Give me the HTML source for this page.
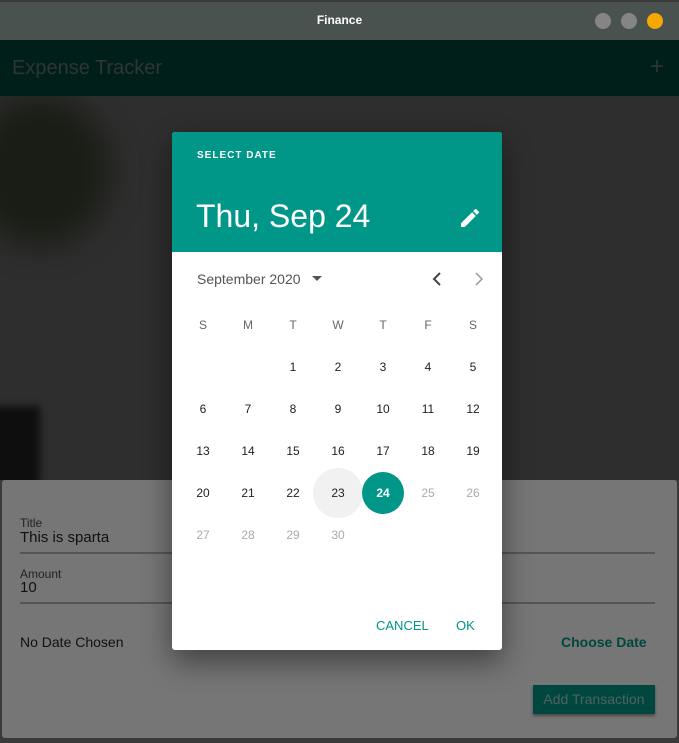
<!DOCTYPE html>
<html><head><style>
*{margin:0;padding:0;box-sizing:border-box}
body{width:679px;height:743px;background:#3a3a3a;font-family:"Liberation Sans",sans-serif;position:relative;overflow:hidden}
.a{position:absolute}
.c{position:absolute;width:40px;text-align:center;font-size:12px;color:#222;transform:translate(-20px,-7px)}
.g{color:#aaa}
.h{color:#666}
</style></head><body>
<div class="a" style="left:0;top:2px;width:679px;height:38px;background:#4a5250"></div>
<div class="a" style="left:0;top:13px;width:679px;text-align:center;color:#fff;font-size:12px;font-weight:bold">Finance</div>
<div class="a" style="left:595px;top:13px;width:16px;height:16px;border-radius:50%;background:#858585"></div>
<div class="a" style="left:621px;top:13px;width:16px;height:16px;border-radius:50%;background:#858585"></div>
<div class="a" style="left:647px;top:13px;width:16px;height:16px;border-radius:50%;background:#f5a800"></div>
<div class="a" style="left:0;top:40px;width:679px;height:56px;background:#001f1a"></div>
<div class="a" style="left:12px;top:57px;font-size:20px;color:#2f3533">Expense Tracker</div>
<div class="a" style="left:650px;top:53px;font-size:24px;color:#2f3533">+</div>
<div class="a" style="left:0;top:96px;width:679px;height:384px;background:#2e2e2e;overflow:hidden">
 <div class="a" style="left:-30px;top:0;width:140px;height:150px;border-radius:50%;background:#1a1d15;filter:blur(15px)"></div>
 <div class="a" style="left:-20px;top:310px;width:60px;height:80px;background:#0e0e0e;filter:blur(4px)"></div>
</div>
<div class="a" style="left:2px;top:480px;width:675px;height:258px;background:#767676;border-radius:3px"></div>
<div class="a" style="left:20px;top:516px;font-size:12px;color:#222">Title</div>
<div class="a" style="left:20px;top:529px;font-size:15px;color:#111">This is sparta</div>
<div class="a" style="left:20px;top:552px;width:635px;height:2px;background:#555"></div>
<div class="a" style="left:20px;top:567px;font-size:12px;color:#222">Amount</div>
<div class="a" style="left:20px;top:579px;font-size:15px;color:#111">10</div>
<div class="a" style="left:20px;top:602px;width:635px;height:2px;background:#555"></div>
<div class="a" style="left:20px;top:634px;font-size:14px;color:#111">No Date Chosen</div>
<div class="a" style="left:561px;top:634px;font-size:14px;font-weight:bold;color:#00473f">Choose Date</div>
<div class="a" style="left:533px;top:685px;width:122px;height:29px;background:#00473f;color:#4f625d;font-size:14px;text-align:center;line-height:29px;box-shadow:0 2px 3px rgba(0,0,0,.4)">Add Transaction</div>
<div class="a" style="left:172px;top:132px;width:330px;height:518px;background:#fff;border-radius:3px;box-shadow:0 12px 30px rgba(0,0,0,.45);overflow:hidden">
 <div class="a" style="left:0;top:0;width:330px;height:120px;background:#009688"></div>
 <div class="a" style="left:25px;top:18px;font-size:10px;letter-spacing:1px;color:#fff;font-weight:bold">SELECT DATE</div>
 <div class="a" style="left:24px;top:66px;font-size:32px;color:#fff">Thu, Sep 24</div>
 <svg class="a" style="left:286px;top:74px" width="24" height="24" viewBox="0 0 24 24"><path fill="#fff" d="M3 17.25V21h3.75L17.81 9.94l-3.75-3.75L3 17.25zM20.71 7.04a1 1 0 000-1.41l-2.34-2.34a1 1 0 00-1.41 0l-1.83 1.83 3.75 3.75 1.83-1.83z"/></svg>
 <div class="a" style="left:25px;top:139px;font-size:14px;color:#555">September 2020</div>
 <svg class="a" style="left:140px;top:144px" width="10" height="6"><path d="M0 0h10L5 5z" fill="#555"/></svg>
 <svg class="a" style="left:260px;top:140px" width="10" height="14"><path d="M8 1L2 7l6 6" stroke="#444" stroke-width="2" fill="none"/></svg>
 <svg class="a" style="left:302px;top:140px" width="10" height="14"><path d="M2 1l6 6-6 6" stroke="#999" stroke-width="1.5" fill="none"/></svg>
 <div class="a" style="left:141px;top:336px;width:50px;height:50px;border-radius:50%;background:#f1f1f1"></div>
 <div class="a" style="left:190px;top:340px;width:42px;height:42px;border-radius:50%;background:#009688"></div>
 <div class="a" style="left:204px;top:486px;font-size:13px;color:#009688">CANCEL</div>
 <div class="a" style="left:284px;top:486px;font-size:13px;color:#009688">OK</div>
</div>
<div class="c h" style="left:203px;top:325px">S</div><div class="c h" style="left:248px;top:325px">M</div><div class="c h" style="left:293px;top:325px">T</div><div class="c h" style="left:338px;top:325px">W</div><div class="c h" style="left:383px;top:325px">T</div><div class="c h" style="left:428px;top:325px">F</div><div class="c h" style="left:473px;top:325px">S</div>
<div class="c" style="left:293px;top:367px">1</div><div class="c" style="left:338px;top:367px">2</div><div class="c" style="left:383px;top:367px">3</div><div class="c" style="left:428px;top:367px">4</div><div class="c" style="left:473px;top:367px">5</div>
<div class="c" style="left:203px;top:409px">6</div><div class="c" style="left:248px;top:409px">7</div><div class="c" style="left:293px;top:409px">8</div><div class="c" style="left:338px;top:409px">9</div><div class="c" style="left:383px;top:409px">10</div><div class="c" style="left:428px;top:409px">11</div><div class="c" style="left:473px;top:409px">12</div>
<div class="c" style="left:203px;top:451px">13</div><div class="c" style="left:248px;top:451px">14</div><div class="c" style="left:293px;top:451px">15</div><div class="c" style="left:338px;top:451px">16</div><div class="c" style="left:383px;top:451px">17</div><div class="c" style="left:428px;top:451px">18</div><div class="c" style="left:473px;top:451px">19</div>
<div class="c" style="left:203px;top:493px">20</div><div class="c" style="left:248px;top:493px">21</div><div class="c" style="left:293px;top:493px">22</div><div class="c" style="left:338px;top:493px">23</div><div class="c" style="left:383px;top:493px;color:#fff;font-weight:bold">24</div><div class="c g" style="left:428px;top:493px">25</div><div class="c g" style="left:473px;top:493px">26</div>
<div class="c g" style="left:203px;top:535px">27</div><div class="c g" style="left:248px;top:535px">28</div><div class="c g" style="left:293px;top:535px">29</div><div class="c g" style="left:338px;top:535px">30</div>
</body></html>
